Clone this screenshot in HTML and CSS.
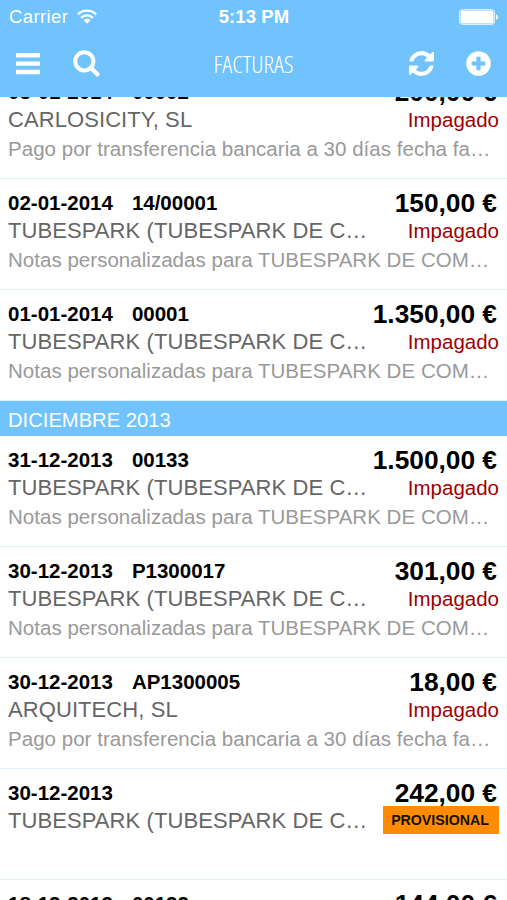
FILE: index.html
```html
<!DOCTYPE html>
<html lang="es">
<head>
<meta charset="utf-8">
<title>Facturas</title>
<link rel="stylesheet" href="styles.css">
</head>
<body>
<header class="header">
  <div class="status-bar">
    <div class="carrier"><span>Carrier</span>
      <svg width="20" height="15" viewBox="0 0 20 15" fill="none" stroke="#fff" stroke-width="2.3"><path d="M.9 5.400a13 13 0 0 1 18.200 0M4.100 8.800a8.500 8.500 0 0 1 11.800 0"/><path d="M6.500 11.200a5 5 0 0 1 7 0L10 14.800z" fill="#fff" stroke="none"/></svg>
    </div>
    <div class="clock">5:13 PM</div>
    <svg class="battery" width="40" height="16" viewBox="0 0 40 16"><rect x=".5" y=".5" width="35" height="15" rx="2.8" fill="none" stroke="#d9efff"/><rect x="1.500" y="1.500" width="33" height="13" rx="1.3" fill="#fff"/><path d="M37 5.400c2.600.8 2.600 4.400 0 5.200z" fill="#fff"/></svg>
  </div>
  <nav class="nav-bar">
    <div class="nav-group nav-left">
      <svg width="24" height="22" viewBox="0 0 24 22" fill="#fff"><rect width="24" height="4.400" rx=".4"/><rect y="8.400" width="24" height="4.400" rx=".4"/><rect y="16.800" width="24" height="4.400" rx=".4"/></svg>
      <svg width="27" height="27" viewBox="0 0 27 27" fill="none" stroke="#fff"><circle cx="11.300" cy="11.300" r="9.100" stroke-width="4"/><path d="M18 18l6.300 6.300" stroke-width="4.400" stroke-linecap="round"/></svg>
    </div>
    <h1 class="title"><span>FACTURAS</span></h1>
    <div class="nav-group nav-right">
      <svg width="25" height="25" viewBox="0 0 1536 1536" fill="#fff"><path d="M1511 928q0 5-1 7-64 268-268 434.500T764 1536q-146 0-282.500-55T238 1324l-129 129q-19 19-45 19t-45-19-19-45V960q0-26 19-45t45-19h448q26 0 45 19t19 45-19 45l-137 137q71 66 161 102t187 36q134 0 250-65t186-179q11-17 53-117 8-23 30-23h192q13 0 22.500 9.500t9.500 22.500zm25-800v448q0 26-19 45t-45 19h-448q-26 0-45-19t-19-45 19-45l138-138Q969 256 768 256q-134 0-250 65T332 500q-11 17-53 117-8 23-30 23H50q-13 0-22.500-9.500T18 608v-7q65-268 270-434.500T768 0q146 0 284 55.500T1297 212l130-129q19-19 45-19t45 19 19 45z"/></svg>
      <svg width="25" height="25" viewBox="0 0 25 25"><circle cx="12.500" cy="12.500" r="12.300" fill="#fff"/><path d="M12.500 5.700v13.600M5.700 12.500h13.600" stroke="#70c3fc" stroke-width="4.200"/></svg>
    </div>
  </nav>
</header>
<main class="list">
  <article class="row">
    <div class="line"><p class="date">03-01-2014<span class="num">00002</span></p><p class="amount">200,00 €</p></div>
    <div class="line"><p class="name">CARLOSICITY, SL</p><p class="status">Impagado</p></div>
    <p class="note">Pago por transferencia bancaria a 30 días fecha fa…</p>
  </article>
  <article class="row">
    <div class="line"><p class="date">02-01-2014<span class="num">14/00001</span></p><p class="amount">150,00 €</p></div>
    <div class="line"><p class="name">TUBESPARK (TUBESPARK DE C…</p><p class="status">Impagado</p></div>
    <p class="note">Notas personalizadas para TUBESPARK DE COM…</p>
  </article>
  <article class="row">
    <div class="line"><p class="date">01-01-2014<span class="num">00001</span></p><p class="amount">1.350,00 €</p></div>
    <div class="line"><p class="name">TUBESPARK (TUBESPARK DE C…</p><p class="status">Impagado</p></div>
    <p class="note">Notas personalizadas para TUBESPARK DE COM…</p>
  </article>
  <h2 class="section">DICIEMBRE 2013</h2>
  <article class="row">
    <div class="line"><p class="date">31-12-2013<span class="num">00133</span></p><p class="amount">1.500,00 €</p></div>
    <div class="line"><p class="name">TUBESPARK (TUBESPARK DE C…</p><p class="status">Impagado</p></div>
    <p class="note">Notas personalizadas para TUBESPARK DE COM…</p>
  </article>
  <article class="row">
    <div class="line"><p class="date">30-12-2013<span class="num">P1300017</span></p><p class="amount">301,00 €</p></div>
    <div class="line"><p class="name">TUBESPARK (TUBESPARK DE C…</p><p class="status">Impagado</p></div>
    <p class="note">Notas personalizadas para TUBESPARK DE COM…</p>
  </article>
  <article class="row">
    <div class="line"><p class="date">30-12-2013<span class="num">AP1300005</span></p><p class="amount">18,00 €</p></div>
    <div class="line"><p class="name">ARQUITECH, SL</p><p class="status">Impagado</p></div>
    <p class="note">Pago por transferencia bancaria a 30 días fecha fa…</p>
  </article>
  <article class="row">
    <div class="line"><p class="date">30-12-2013</p><p class="amount">242,00 €</p></div>
    <div class="line"><p class="name">TUBESPARK (TUBESPARK DE C…</p><p class="badge">PROVISIONAL</p></div>
  </article>
  <article class="row">
    <div class="line"><p class="date">18-12-2013<span class="num">00132</span></p><p class="amount">144,00 €</p></div>
  </article>
</main>
</body>
</html>
```
FILE: styles.css
```css
* { box-sizing: border-box; margin: 0; padding: 0; }
body {
  height: 900px;
  overflow: hidden;
  background: #fff;
  font-family: "Liberation Sans", Arial, sans-serif;
}
svg { display: block; flex: none; }
.header {
  position: relative;
  z-index: 1;
  height: 97px;
  background: #70c3fc;
  color: #fff;
}
.status-bar {
  display: grid;
  grid-template-columns: 1fr auto 1fr;
  align-items: center;
  height: 33px;
  padding: 0 8px 0 9px;
}
.carrier { display: flex; align-items: center; gap: 9px; font-size: 18.5px; letter-spacing: .4px; }
.clock { font-size: 18.5px; font-weight: bold; letter-spacing: .1px; }
.battery { justify-self: end; }
.nav-bar {
  display: grid;
  grid-template-columns: 1fr auto 1fr;
  align-items: center;
  height: 61px;
  padding: 0 16px;
}
.nav-group { display: flex; align-items: center; }
.nav-left { gap: 33px; }
.nav-right { gap: 32px; justify-content: flex-end; }
.title {
  font-family: "Open Sans", sans-serif;
  font-size: 24.5px;
  font-weight: 300;
  font-stretch: 75%;
  line-height: 34px;
}
.title span { display: block; }
.list { margin-top: -29px; }
.row {
  height: 111px;
  padding: 10px 8px 0;
  border-bottom: 1px solid #dceffb;
}
.line { display: flex; justify-content: space-between; height: 28px; white-space: nowrap; }
.date { font-size: 20.5px; line-height: 28px; font-weight: bold; color: #000; }
.num { margin-left: 19px; }
.amount { margin-right: 2px; font-size: 26.3px; line-height: 28px; font-weight: bold; color: #000; }
.name { font-size: 22px; line-height: 28px; letter-spacing: .08px; color: #666; }
.status { font-size: 20.5px; line-height: 27px; color: #a00000; }
.note { font-size: 20.5px; line-height: 30px; letter-spacing: .03px; color: #999; white-space: nowrap; }
.badge {
  width: 116px;
  height: 28px;
  padding-right: 2px;
  margin-top: -1px;
  background: #ff8c00;
  color: #111;
  font-size: 14.2px;
  line-height: 28px;
  font-weight: bold;
  text-align: center;
}
.section {
  height: 35px;
  padding-left: 8px;
  background: #70c3fc;
  color: #fff;
  font-size: 20.2px;
  font-weight: normal;
  line-height: 38px;
}
```
